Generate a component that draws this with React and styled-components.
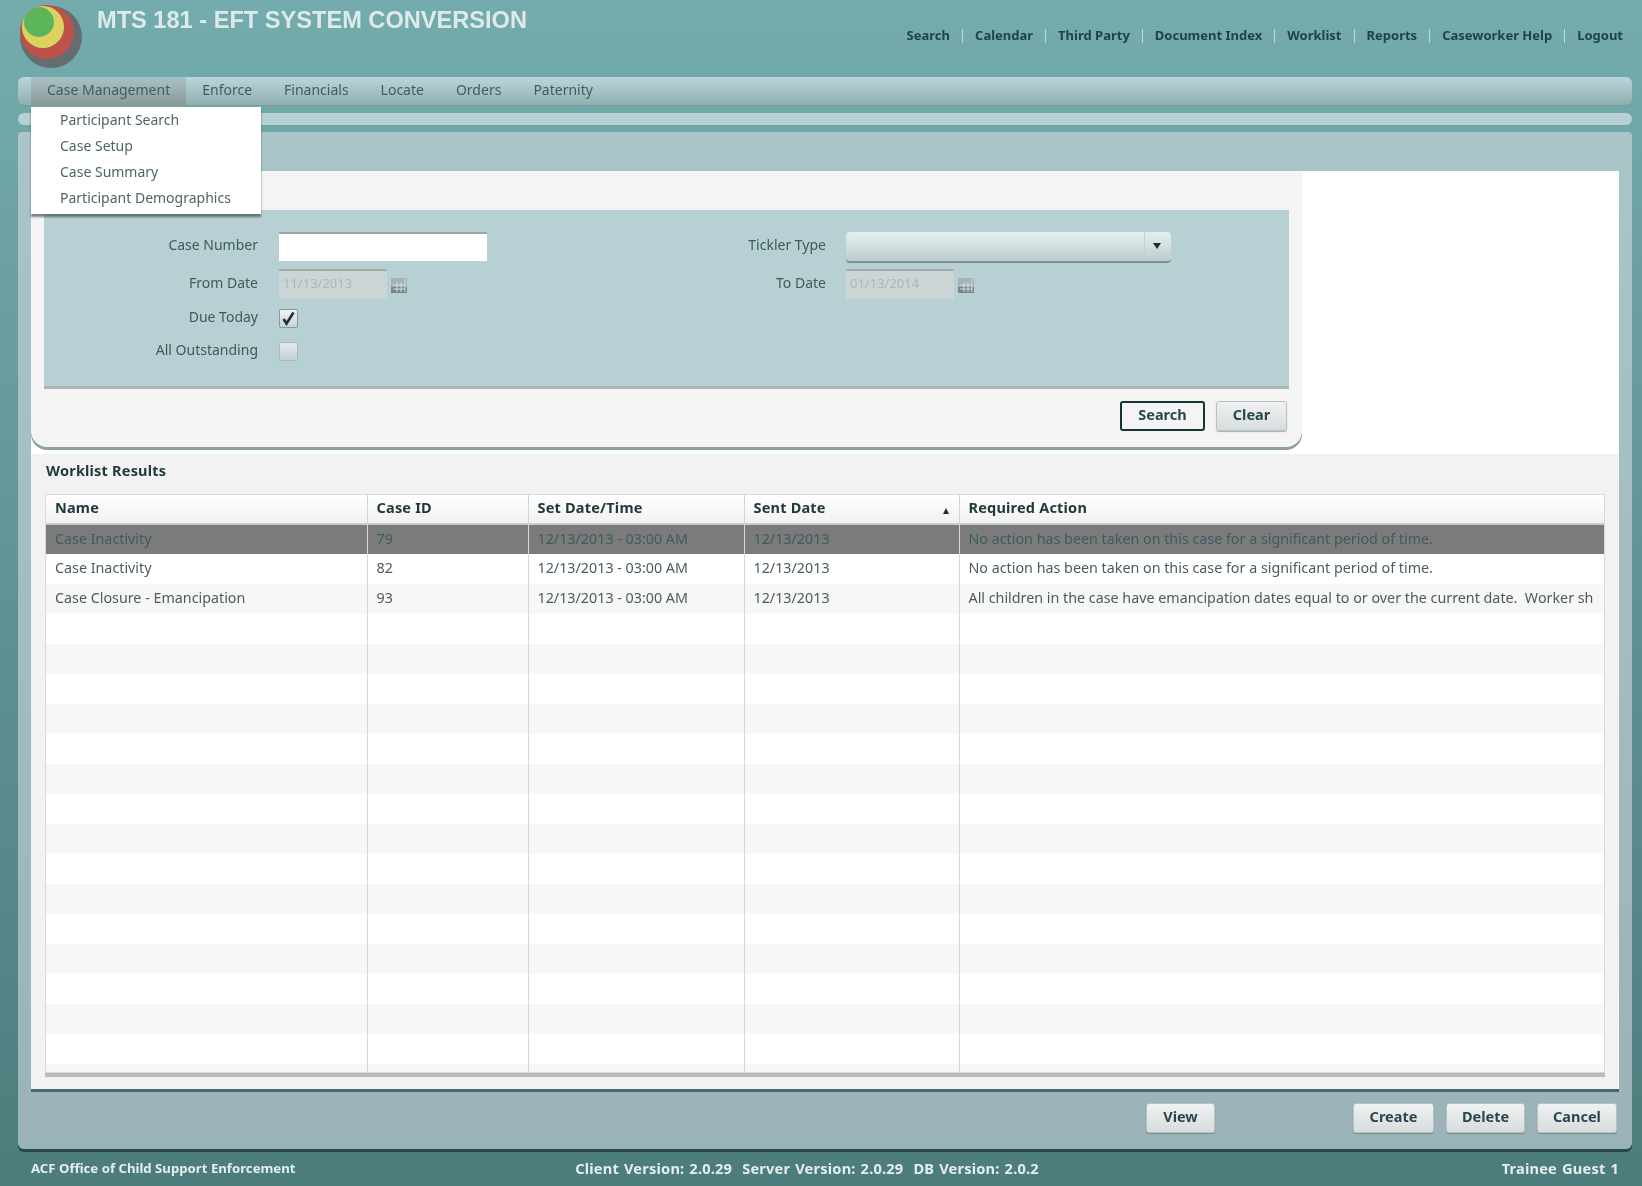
import React from 'react'
import styled, { createGlobalStyle } from 'styled-components'

const GlobalStyle = createGlobalStyle`
  html, body {
    margin: 0;
    padding: 0;
    width: 1642px;
    height: 1186px;
    overflow: hidden;
    background: #5f8f90;
  }
  * {
    box-sizing: border-box;
  }
`

const FONT = `"Noto Sans", "Open Sans", sans-serif`

const Page = styled.div`
  width: 1642px;
  height: 1186px;
  display: flex;
  flex-direction: column;
  font-family: ${FONT};
  font-size: 14px;
  color: #44595b;
  background: linear-gradient(#74abac 0%, #6fa6a8 12%, #5f9091 55%, #4d7c7d 100%);
  filter: blur(0.6px);
  position: relative;
`

const Header = styled.header`
  height: 77px;
  flex: none;
  display: flex;
  padding: 0 19px 0 18px;
`

const Logo = styled.svg`
  width: 68px;
  height: 72px;
  flex: none;
`

const Title = styled.h1`
  margin: 7px 0 0 11px;
  font-family: "Liberation Sans", Arial, sans-serif;
  font-size: 23.6px;
  line-height: 26px;
  font-weight: 700;
  color: #dcebea;
  white-space: nowrap;
`

const TopNav = styled.nav`
  margin: 27px 0 0 auto;
  height: 17px;
  display: flex;
  align-items: center;
`

const TopLink = styled.a`
  font-size: 13px;
  font-weight: 700;
  line-height: 17px;
  color: #1f4347;
  white-space: nowrap;
  & + &::before {
    content: '';
    display: inline-block;
    width: 1px;
    height: 14px;
    margin: 0 12px;
    vertical-align: -3px;
    background: #c2d8d8;
  }
`

const MenuBar = styled.div`
  height: 28px;
  flex: none;
  margin: 0 10px 0 18px;
  padding-left: 13px;
  display: flex;
  border-radius: 6px;
  background: linear-gradient(#bdd5da, #8fafb2);
  box-shadow: 0 1px 0 #7c9a9c;
`

const MenuItem = styled.div`
  padding: 0 16px;
  line-height: 26px;
  font-size: 14px;
  white-space: nowrap;
  color: #435d5f;
  background: ${props => (props.$active ? 'linear-gradient(#a8c2c5, #8d9899)' : 'none')};
`

const Dropdown = styled.ul`
  position: absolute;
  top: 107px;
  left: 31px;
  width: 230px;
  height: 107px;
  margin: 0;
  padding: 0 0 0 29px;
  list-style: none;
  background: #fff;
  box-shadow: 0 3px 2px rgba(50, 70, 70, 0.65);
  z-index: 2;
`

const DropdownItem = styled.li`
  height: 26px;
  line-height: 26px;
  font-size: 14px;
  white-space: nowrap;
  color: #4f6466;
`

const ThinBar = styled.div`
  height: 12px;
  flex: none;
  margin: 8px 10px 7px 18px;
  border-radius: 6px;
  background: #b6d0d4;
`

const MainPanel = styled.main`
  height: 1017px;
  flex: none;
  margin: 0 10px 0 18px;
  padding: 39px 13px 0;
  display: flex;
  flex-direction: column;
  border-radius: 4px 4px 6px 6px;
  background: linear-gradient(#aac5c8, #9ab3b8);
  box-shadow: 0 3px 0 #264a4b;
`

const Content = styled.div`
  height: 918px;
  flex: none;
  display: flex;
  flex-direction: column;
  background: #fff;
  box-shadow: 0 3px 0 #47676a;
`

const SearchCard = styled.section`
  width: 1271px;
  height: 276px;
  flex: none;
  padding: 39px 13px 0;
  border-radius: 0 0 16px 16px;
  background: #f4f4f4;
  box-shadow: 0 3px 0 #8da0a2;
  position: relative;
`

const FormGrid = styled.div`
  height: 176px;
  padding-top: 21px;
  display: grid;
  grid-template-columns: 235px 320px 247px 1fr;
  grid-template-rows: 30px 30px 22px 28px;
  row-gap: 8px;
  align-items: center;
  background: #b6d0d3;
  box-shadow: 0 3px 0 #a9b4b5;
`

const Label = styled.label`
  padding-right: ${props => (props.$right ? 20 : 21)}px;
  margin-top: -4px;
  text-align: right;
  font-size: 14px;
  color: #405a5c;
  white-space: nowrap;
`

const TextInput = styled.input`
  width: 208px;
  height: 29px;
  padding: 0 4px;
  border: 0;
  border-top: 2px solid #96a9aa;
  background: #fff;
  font: inherit;
`

const DateField = styled.div`
  display: flex;
  align-items: center;
  gap: 3px;
  margin-top: -1px;
`

const DateInput = styled.input`
  width: 108px;
  height: 30px;
  padding: 0 4px 3px;
  border: 0;
  border-top: 2px solid #a3acac;
  background: #ccd5d6;
  color: #aab6b7;
  font: inherit;
  font-size: 13px;
  &:disabled {
    opacity: 1;
    color: #aab6b7;
  }
`

const CalendarIcon = styled.svg`
  width: 18px;
  height: 18px;
  margin-top: 2px;
`

const Select = styled.div`
  width: 325px;
  height: 29px;
  display: flex;
  justify-content: flex-end;
  border-radius: 4px;
  background: linear-gradient(#e3efef, #bccecf);
  box-shadow: 0 2px 0 #7d9193;
`

const SelectArrow = styled.div`
  width: 27px;
  padding-right: 3px;
  display: flex;
  align-items: center;
  justify-content: center;
  border-left: 1px solid #c4d2d2;
  &::after {
    content: '';
    border-left: 4px solid transparent;
    border-right: 4px solid transparent;
    border-top: 6px solid #152d30;
  }
`

const CheckBox = styled.div`
  width: 19px;
  height: 19px;
  display: flex;
  align-items: center;
  justify-content: center;
  border-radius: 2px;
  border: 1px solid ${props => (props.$checked ? '#8a9898' : '#a6b4b5')};
  background: linear-gradient(#f0f3f3, #c9d3d3);
  opacity: ${props => (props.$checked ? 1 : 0.75)};
`

const CardButtons = styled.div`
  margin-top: 15px;
  display: flex;
  justify-content: flex-end;
  gap: 11px;
  padding-right: 2px;
`

const Button = styled.button`
  width: ${props => props.$width}px;
  height: 30px;
  padding: 0 0 4px;
  border-radius: 3px;
  border: ${props => (props.$primary ? '2px solid #153438' : '1px solid #b9c2c2')};
  background: ${props => (props.$primary ? '#f4f4f4' : 'linear-gradient(#f0f2f2, #d7dcdc)')};
  font-family: ${FONT};
  font-size: 14.5px;
  font-weight: 700;
  color: #2a484b;
  box-shadow: ${props => (props.$primary ? 'none' : '0 1px 1px rgba(70, 90, 90, 0.45)')};
`

const Results = styled.section`
  flex: 1;
  margin-top: 7px;
  padding: 6px 14px 0 14px;
  background: #f2f2f2;
`

const ResultsTitle = styled.h2`
  margin: 0 0 14px 1px;
  font-size: 14.5px;
  letter-spacing: 0.2px;
  line-height: 20px;
  font-weight: 700;
  color: #24393c;
`

const TableWrap = styled.div`
  height: 579px;
  overflow: hidden;
  background: #fff;
  border: 1px solid #d6dcdc;
  box-shadow: 0 4px 0 #b7bcbc;
`

const Table = styled.table`
  width: 100%;
  table-layout: fixed;
  border-collapse: collapse;
`

const Th = styled.th`
  height: 29px;
  padding: 0 9px 5px;
  text-align: left;
  font-size: 14.5px;
  letter-spacing: 0.2px;
  font-weight: 700;
  color: #22393c;
  background: linear-gradient(#fff, #f1f1f1);
  border-left: 1px solid #d0d6d6;
  border-bottom: 2px solid #c3cdcd;
  white-space: nowrap;
  position: relative;
  &:first-child {
    border-left: 0;
  }
`

const SortMark = styled.span`
  position: absolute;
  right: 10px;
  top: 13px;
  border-left: 3px solid transparent;
  border-right: 3px solid transparent;
  border-bottom: 6px solid #1c3133;
`

const Row = styled.tr`
  height: 30px;
  background: ${props => (props.$selected ? '#7b7b7b' : props.$odd ? '#f7f7f7' : '#fff')};
  color: ${props => (props.$selected ? '#3d5c60' : '#4b5c5e')};
`

const Td = styled.td`
  padding: 0 9px 3px;
  font-size: 14.3px;
  white-space: pre;
  overflow: hidden;
  border-left: 1px solid #d4d8d8;
  &:first-child {
    border-left: 0;
  }
`

const ActionBar = styled.div`
  flex: 1;
  padding: 14px 2px 0 0;
  display: flex;
  gap: 12px;
  justify-content: flex-end;
`

const Spacer = styled.div`
  width: 114px;
`

const Footer = styled.footer`
  flex: 1;
  padding: 1px 23px 0 31px;
  display: flex;
  align-items: center;
  justify-content: space-between;
  font-weight: 700;
  color: #e3eeee;
  white-space: nowrap;
`

const FooterSmall = styled.span`
  font-size: 13.2px;
  width: 464px;
`

const FooterText = styled.span`
  font-size: 14.6px;
  letter-spacing: 0.2px;
  word-spacing: 1px;
`

const FooterUser = styled(FooterText)`
  width: 500px;
  text-align: right;
`

const topLinks = ['Search', 'Calendar', 'Third Party', 'Document Index', 'Worklist', 'Reports', 'Caseworker Help', 'Logout']
const menus = ['Case Management', 'Enforce', 'Financials', 'Locate', 'Orders', 'Paternity']
const subMenu = ['Participant Search', 'Case Setup', 'Case Summary', 'Participant Demographics']
const columns = [
  { name: 'Name', width: 321 },
  { name: 'Case ID', width: 161 },
  { name: 'Set Date/Time', width: 216 },
  { name: 'Sent Date', width: 215, sorted: true },
  { name: 'Required Action' },
]
const noAction = 'No action has been taken on this case for a significant period of time.'
const rows = [
  ['Case Inactivity', '79', '12/13/2013 - 03:00 AM', '12/13/2013', noAction],
  ['Case Inactivity', '82', '12/13/2013 - 03:00 AM', '12/13/2013', noAction],
  ['Case Closure - Emancipation', '93', '12/13/2013 - 03:00 AM', '12/13/2013', 'All children in the case have emancipation dates equal to or over the current date.  Worker sh'],
  ...Array.from({ length: 16 }, () => ['\u00a0', '', '', '', '']),
]

const Calendar = () => (
  <CalendarIcon viewBox="0 0 18 18">
    <rect x="1" y="2" width="16" height="15" fill="#a3b3b5" />
    <rect x="1" y="11" width="16" height="6" fill="#74878a" />
    <path d="M3 9h12M3 13h12M7 6v10M11 6v10M15 3v13" stroke="#d3dcdc" strokeWidth="1" />
  </CalendarIcon>
)

export default function App() {
  return (
    <Page>
      <GlobalStyle />
      <Header>
        <Logo viewBox="0 0 68 72">
          <circle cx="33" cy="37" r="31" fill="#666d70" />
          <circle cx="29" cy="32" r="27" fill="#bd524b" />
          <circle cx="25" cy="27" r="21" fill="#dcd35f" />
          <circle cx="21" cy="22" r="15" fill="#5cb55b" />
        </Logo>
        <Title>MTS 181 - EFT SYSTEM CONVERSION</Title>
        <TopNav>
          {topLinks.map(link => (
            <TopLink key={link}>{link}</TopLink>
          ))}
        </TopNav>
      </Header>
      <MenuBar>
        {menus.map((menu, i) => (
          <MenuItem key={menu} $active={i === 0}>{menu}</MenuItem>
        ))}
      </MenuBar>
      <Dropdown>
        {subMenu.map(item => (
          <DropdownItem key={item}>{item}</DropdownItem>
        ))}
      </Dropdown>
      <ThinBar />
      <MainPanel>
        <Content>
          <SearchCard>
            <FormGrid>
              <Label>Case Number</Label>
              <TextInput />
              <Label $right>Tickler Type</Label>
              <Select><SelectArrow /></Select>
              <Label>From Date</Label>
              <DateField>
                <DateInput disabled value="11/13/2013" />
                <Calendar />
              </DateField>
              <Label $right>To Date</Label>
              <DateField>
                <DateInput disabled value="01/13/2014" />
                <Calendar />
              </DateField>
              <Label>Due Today</Label>
              <CheckBox $checked>
                <svg width="15" height="15" viewBox="0 0 15 15">
                  <path d="M2.5 8l3 4.5L12.5 1.5" fill="none" stroke="#1c3336" strokeWidth="2.6" />
                </svg>
              </CheckBox>
              <span />
              <span />
              <Label>All Outstanding</Label>
              <CheckBox />
            </FormGrid>
            <CardButtons>
              <Button $primary $width={85}>Search</Button>
              <Button $width={71}>Clear</Button>
            </CardButtons>
          </SearchCard>
          <Results>
            <ResultsTitle>Worklist Results</ResultsTitle>
            <TableWrap>
              <Table>
                <colgroup>
                  {columns.map(col => (
                    <col key={col.name} style={col.width ? { width: col.width } : undefined} />
                  ))}
                </colgroup>
                <thead>
                  <tr>
                    {columns.map(col => (
                      <Th key={col.name}>
                        {col.name}
                        {col.sorted && <SortMark />}
                      </Th>
                    ))}
                  </tr>
                </thead>
                <tbody>
                  {rows.map((row, r) => (
                    <Row key={r} $selected={r === 0} $odd={r % 2 === 0}>
                      {row.map((cell, c) => (
                        <Td key={c}>{cell}</Td>
                      ))}
                    </Row>
                  ))}
                </tbody>
              </Table>
            </TableWrap>
          </Results>
        </Content>
        <ActionBar>
          <Button $width={69}>View</Button>
          <Spacer />
          <Button $width={81}>Create</Button>
          <Button $width={79}>Delete</Button>
          <Button $width={80}>Cancel</Button>
        </ActionBar>
      </MainPanel>
      <Footer>
        <FooterSmall>ACF Office of Child Support Enforcement</FooterSmall>
        <FooterText>Client Version: 2.0.29&nbsp;&nbsp;Server Version: 2.0.29&nbsp;&nbsp;DB Version: 2.0.2</FooterText>
        <FooterUser>Trainee Guest 1</FooterUser>
      </Footer>
    </Page>
  )
}
